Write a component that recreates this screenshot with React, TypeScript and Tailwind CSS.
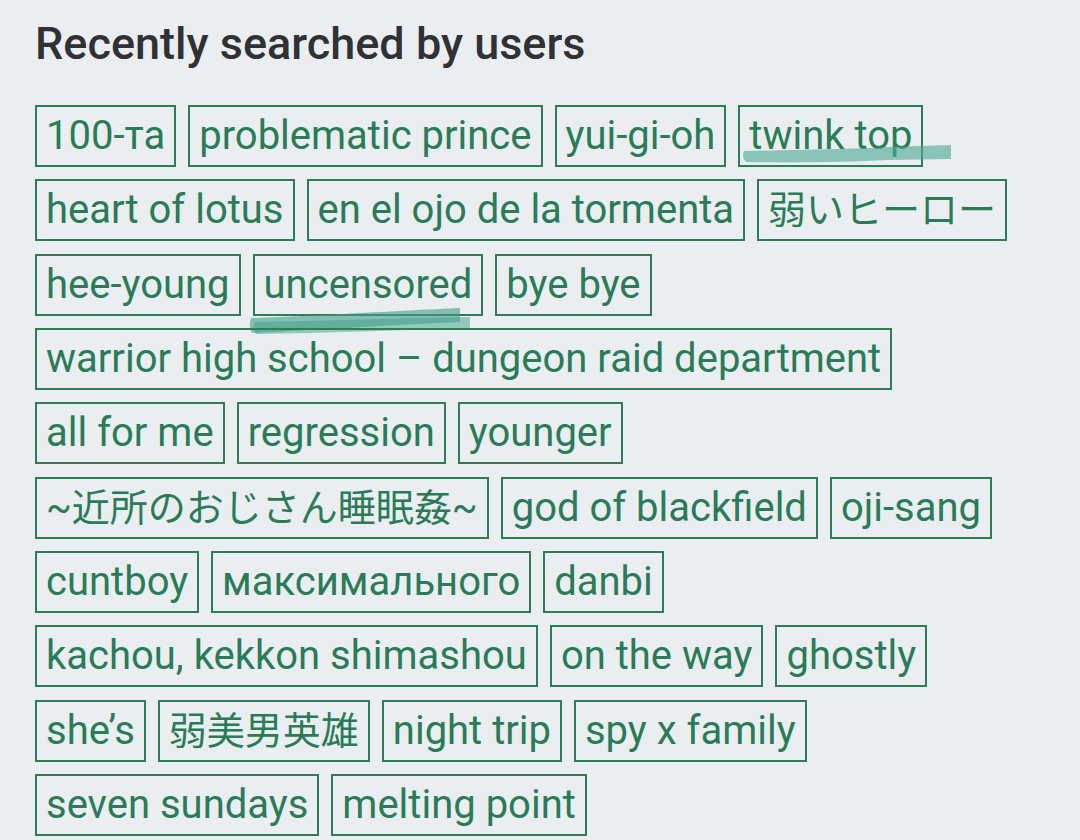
import React from "react";

type Tag = { label: string; cjk?: boolean; mark?: "twink" | "uncensored" };

const tags: Tag[] = [
  { label: "100-та" },
  { label: "problematic prince" },
  { label: "yui-gi-oh" },
  { label: "twink top", mark: "twink" },
  { label: "heart of lotus" },
  { label: "en el ojo de la tormenta" },
  { label: "弱いヒーロー", cjk: true },
  { label: "hee-young" },
  { label: "uncensored", mark: "uncensored" },
  { label: "bye bye" },
  { label: "warrior high school – dungeon raid department" },
  { label: "all for me" },
  { label: "regression" },
  { label: "younger" },
  { label: "~近所のおじさん睡眠姦~", cjk: true },
  { label: "god of blackfield" },
  { label: "oji-sang" },
  { label: "cuntboy" },
  { label: "максимального" },
  { label: "danbi" },
  { label: "kachou, kekkon shimashou" },
  { label: "on the way" },
  { label: "ghostly" },
  { label: "she’s" },
  { label: "弱美男英雄", cjk: true },
  { label: "night trip" },
  { label: "spy x family" },
  { label: "seven sundays" },
  { label: "melting point" },
];

// highlighter scribbles drawn on top of a couple of tags
function TwinkMark() {
  return (
    <svg
      className="absolute left-[-2px] top-[36px] pointer-events-none"
      width="220"
      height="24"
      viewBox="0 0 220 24"
    >
      <path
        d="M6 8 C60 7, 110 6, 150 4 L213 2 L213 16 L150 17 C110 19, 60 20, 8 19 Q3 14 6 8 Z"
        fill="#4fa996"
        fillOpacity="0.62"
      />
    </svg>
  );
}

function UncensoredMark() {
  return (
    <svg
      className="absolute left-[-12px] top-[48px] pointer-events-none"
      width="232"
      height="34"
      viewBox="0 0 232 34"
    >
      <path
        d="M8 14 C70 12, 150 7, 217 4 L217 18 C150 21, 70 26, 9 29 Q5 22 8 14 Z"
        fill="#3f9f8a"
        fillOpacity="0.6"
      />
      <path
        d="M12 18 C80 17, 160 14, 227 13 L227 24 C160 26, 80 29, 13 30 Q9 24 12 18 Z"
        fill="#3f9f8a"
        fillOpacity="0.5"
      />
    </svg>
  );
}

export default function App() {
  return (
    <div
      className="min-h-[840px] w-[1080px] bg-[#ebeef1] px-[35px] pt-[17px]"
      style={{ fontFamily: "Roboto, 'Noto Sans CJK JP', sans-serif" }}
    >
      <h2 className="text-[45px] leading-[54px] font-medium text-[#2f3135] mb-[34px]">
        Recently searched by users
      </h2>
      <div className="flex flex-wrap gap-x-3 gap-y-[12.33px]">
        {tags.map((t) => (
          <div
            key={t.label}
            className={
              "relative h-[62px] border-2 border-[#2f7c59] px-[9px] leading-[58px] text-[#2a7b57] whitespace-nowrap " +
              (t.cjk ? "text-[38px]" : "text-[40px]")
            }
          >
            {t.label}
            {t.mark === "twink" && <TwinkMark />}
            {t.mark === "uncensored" && <UncensoredMark />}
          </div>
        ))}
      </div>
    </div>
  );
}
